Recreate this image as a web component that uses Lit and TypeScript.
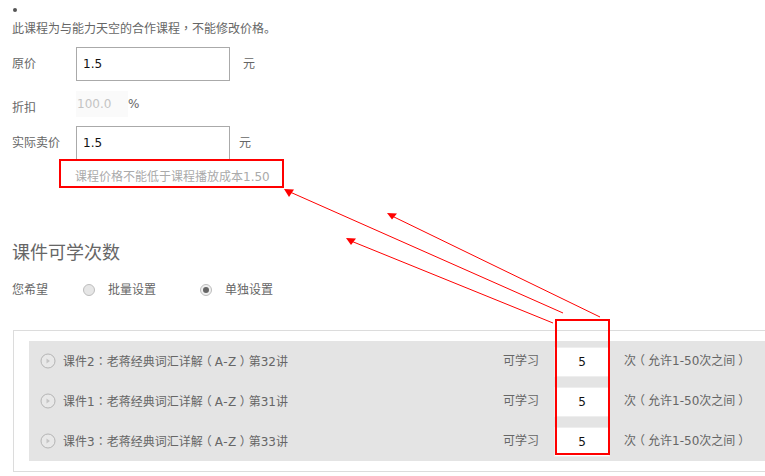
import { LitElement, html, css } from "lit";
import { customElement } from "lit/decorators.js";

const lessons = [
  ["课件2", "第32讲"],
  ["课件1", "第31讲"],
  ["课件3", "第33讲"],
];

@customElement("app-root")
export class AppRoot extends LitElement {
  static styles = css`
    :host {
      display: block;
      position: relative;
      width: 765px;
      height: 476px;
      overflow: hidden;
      background: #fff;
      color: #666;
      font: 12px/20px "DejaVu Sans", "Noto Sans CJK SC", sans-serif;
    }
    .page {
      padding: 8px 0 0 12px;
    }
    .dot {
      width: 4px;
      height: 4px;
      margin-left: 1px;
      border-radius: 50%;
      background: #555;
    }
    .note {
      margin-top: 6px;
      height: 20px;
    }
    /* fullwidth punctuation sits in the middle of its box in the reference */
    .mid {
      font-family: "Noto Sans CJK TC", sans-serif;
    }
    .paren {
      font-feature-settings: "halt";
      margin: 0 3px;
    }
    .latin {
      letter-spacing: 0.5px;
    }
    .row {
      display: flex;
      align-items: center;
      height: 34px;
    }
    .row.first {
      margin-top: 9px;
    }
    .row.discount {
      margin-top: 10px;
      height: 26px;
      margin-bottom: 9px;
    }
    .label {
      width: 64px;
    }
    .discount .label {
      position: relative;
      top: 4px;
    }
    input {
      box-sizing: border-box;
      font: inherit;
      margin: 0;
      outline: none;
    }
    .price {
      width: 154px;
      height: 34px;
      padding: 0 6px;
      border: 1px solid #aaa;
      color: #111;
    }
    .rate {
      width: 52px;
      height: 26px;
      padding: 0 1px;
      border: 0;
      background: #fafafa;
      color: #c4c4c4;
    }
    .unit {
      margin-left: 13px;
    }
    .unit.near {
      margin-left: 9px;
    }
    .hint {
      margin: 7px 0 0 63px;
      color: #aaa;
    }
    h2 {
      margin: 53px 0 0;
      font-size: 18px;
      font-weight: 400;
      line-height: 26px;
      color: #666;
    }
    .choose {
      display: flex;
      align-items: center;
      margin-top: 14px;
      height: 20px;
    }
    .choose .want {
      width: 71px;
    }
    .radio {
      box-sizing: border-box;
      width: 12px;
      height: 12px;
      border-radius: 50%;
      border: 1px solid #bdbdbd;
      background: #e6e6e6;
      display: flex;
      align-items: center;
      justify-content: center;
      margin-right: 13px;
    }
    .radio.on {
      background: #f0f0f0;
    }
    .radio.on::after {
      content: "";
      width: 6px;
      height: 6px;
      border-radius: 50%;
      background: #666;
    }
    .opt {
      width: 92px;
    }
    .box {
      margin: 30px -40px 0 1px;
      border: 1px solid #dcdcdc;
      padding: 10px 15px;
      height: 120px;
    }
    .list {
      background: #e4e4e4;
      height: 120px;
    }
    .lesson {
      display: flex;
      align-items: center;
      height: 40px;
      padding-left: 11px;
    }
    .lesson svg {
      width: 16px;
      height: 16px;
      flex: none;
      margin-right: 7px;
    }
    .name {
      width: 440px;
      white-space: nowrap;
    }
    .can {
      width: 51px;
    }
    .times {
      box-sizing: border-box;
      width: 56px;
      height: 30px;
      margin-top: 2px;
      border: 1px solid #eee;
      background: #fff;
      color: #111;
      text-align: center;
      padding: 0;
    }
    .limit {
      margin-left: 14px;
      white-space: nowrap;
    }
    .mark {
      position: absolute;
      box-sizing: border-box;
      border: 2px solid #f00;
    }
    .mark.hint-mark {
      left: 59px;
      top: 159px;
      width: 225px;
      height: 29px;
    }
    .mark.col-mark {
      left: 555px;
      top: 319px;
      width: 55px;
      height: 136px;
    }
    .arrows {
      position: absolute;
      inset: 0;
      width: 765px;
      height: 476px;
      pointer-events: none;
    }
  `;

  render() {
    return html`
      <div class="page">
        <div class="dot"></div>
        <div class="note">此课程为与能力天空的合作课程<span class="mid">，</span>不能修改价格。</div>
        <div class="row first">
          <span class="label">原价</span>
          <input class="price" value="1.5" />
          <span class="unit">元</span>
        </div>
        <div class="row discount">
          <span class="label">折扣</span>
          <input class="rate" value="100.0" />
          <span>%</span>
        </div>
        <div class="row">
          <span class="label">实际卖价</span>
          <input class="price" value="1.5" />
          <span class="unit near">元</span>
        </div>
        <div class="hint">课程价格不能低于课程播放成本1.50</div>
        <h2>课件可学次数</h2>
        <div class="choose">
          <span class="want">您希望</span>
          <span class="radio"></span>
          <span class="opt">批量设置</span>
          <span class="radio on"></span>
          <span>单独设置</span>
        </div>
        <div class="box">
          <div class="list">
            ${lessons.map(
              ([name, part]) => html`
                <div class="lesson">
                  <svg viewBox="0 0 16 16">
                    <circle cx="8" cy="8" r="7" fill="#e8e8e8" stroke="#b4b4b4" />
                    <path d="M6.500 5.500 10 8l-3.500 2.500z" fill="#c4c4c4" />
                  </svg>
                  <span class="name">${name}<span class="mid">：</span>老蒋经典词汇详解<span class="paren">（</span><span class="latin">A-Z</span><span class="paren">）</span>${part}</span>
                  <span class="can">可学习</span>
                  <input class="times" value="5" />
                  <span class="limit">次<span class="paren">（</span>允许1-50次之间<span class="paren">）</span></span>
                </div>
              `
            )}
          </div>
        </div>
      </div>
      <div class="mark hint-mark"></div>
      <div class="mark col-mark"></div>
      <svg class="arrows" viewBox="0 0 765 476" fill="#f00" stroke="none">
        <path d="M563 313 290 192" stroke="#f00" fill="none" />
        <path d="M284 189 294 189.500 289 197z" />
        <path d="M600 317 392 216" stroke="#f00" fill="none" />
        <path d="M387 213 397 213.500 392 219.500z" />
        <path d="M553 323 351 241" stroke="#f00" fill="none" />
        <path d="M346 238 356 238.500 351 245z" />
      </svg>
    `;
  }
}
